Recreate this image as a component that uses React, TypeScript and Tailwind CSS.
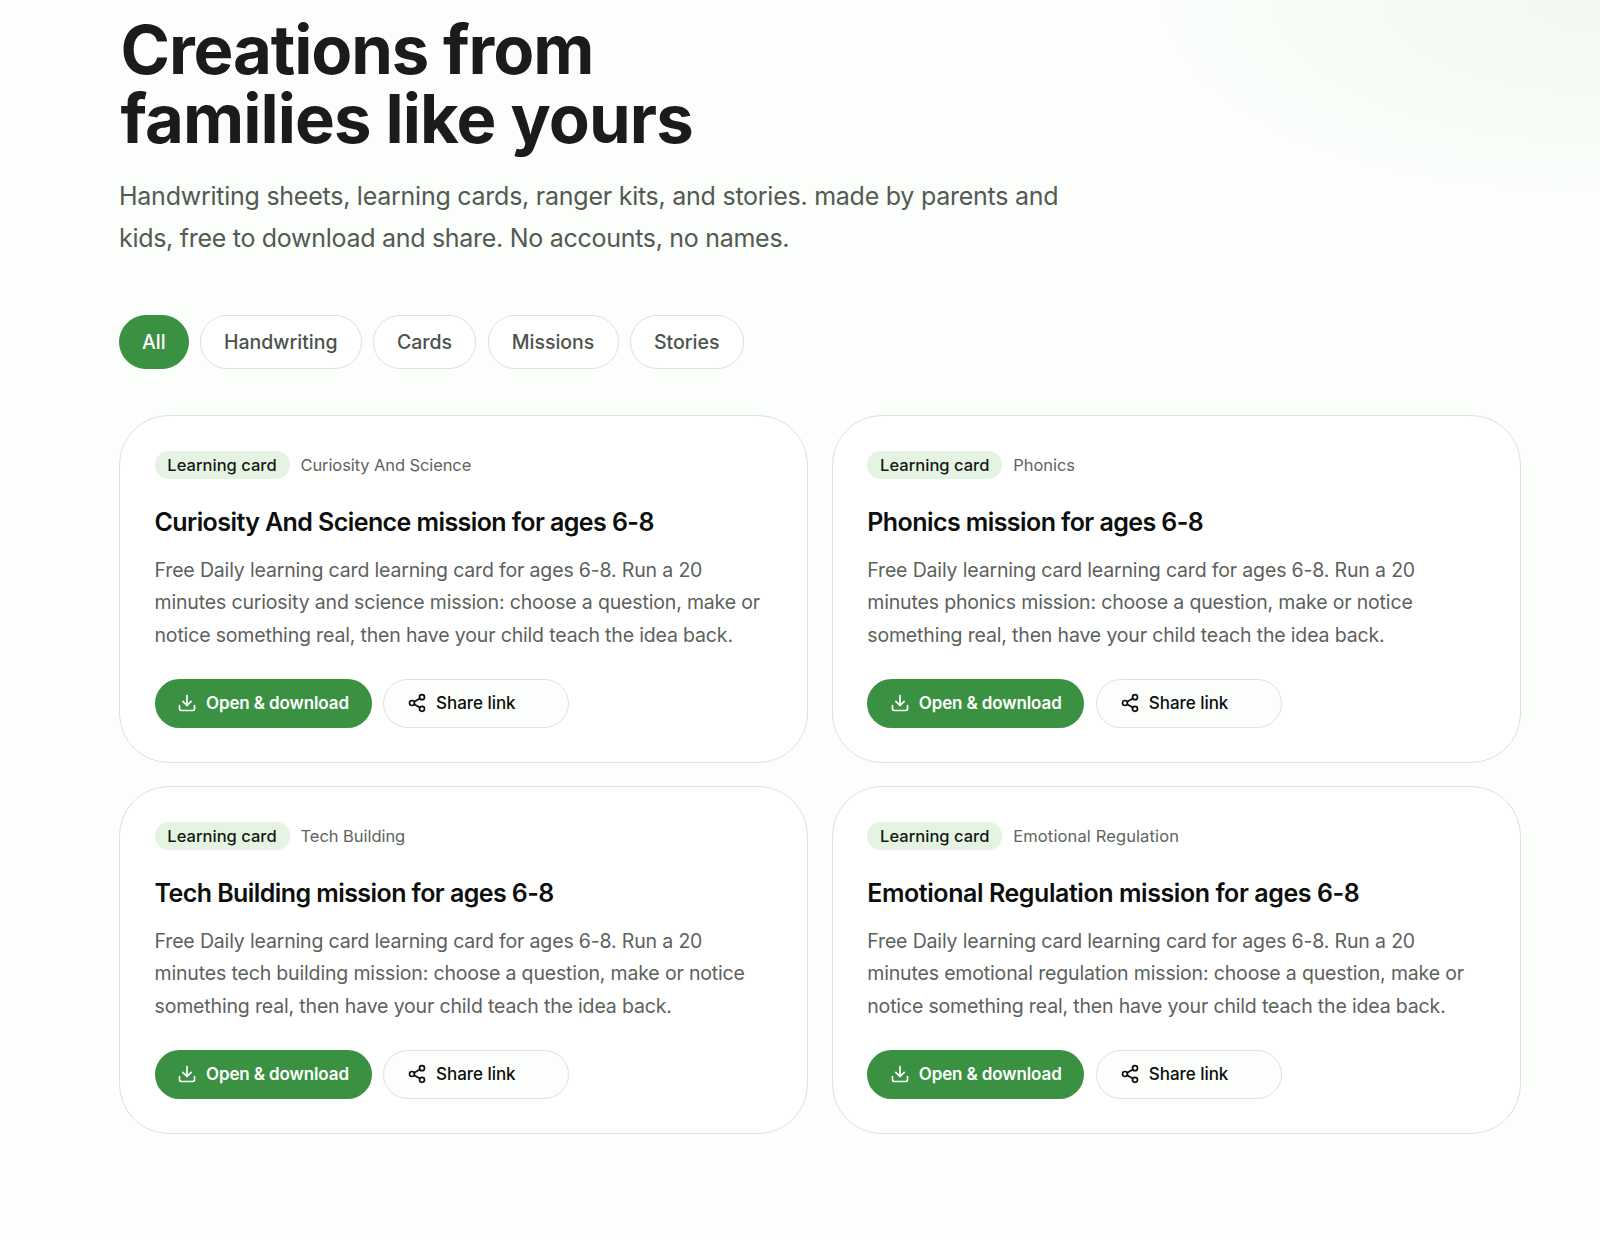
import { Download, Share2 } from "lucide-react";
import clsx from "clsx";

const filters = [
  { label: "All", width: "w-[69.5px]", active: true },
  { label: "Handwriting", width: "w-[161.5px]" },
  { label: "Cards", width: "w-[103px]" },
  { label: "Missions", width: "w-[131px]" },
  { label: "Stories", width: "w-[113.5px]" },
];

const intro = "Free Daily learning card learning card for ages 6-8. Run a 20";

const cards = [
  {
    topic: "Curiosity And Science",
    titleTracking: "tracking-[-0.58px]",
    topicTracking: "tracking-[-0.1px]",
    lines: [
      intro,
      "minutes curiosity and science mission: choose a question, make or",
      "notice something real, then have your child teach the idea back.",
    ],
  },
  {
    topic: "Phonics",
    titleTracking: "tracking-[-0.57px]",
    topicTracking: "tracking-[-0.05px]",
    lines: [
      intro,
      "minutes phonics mission: choose a question, make or notice",
      "something real, then have your child teach the idea back.",
    ],
  },
  {
    topic: "Tech Building",
    titleTracking: "tracking-[-0.57px]",
    topicTracking: "tracking-[-0.05px]",
    lines: [
      intro,
      "minutes tech building mission: choose a question, make or notice",
      "something real, then have your child teach the idea back.",
    ],
  },
  {
    topic: "Emotional Regulation",
    titleTracking: "tracking-[-0.43px]",
    topicTracking: "tracking-[0.12px]",
    lines: [
      intro,
      "minutes emotional regulation mission: choose a question, make or",
      "notice something real, then have your child teach the idea back.",
    ],
  },
];

type Card = (typeof cards)[number];

function CreationCard({ topic, titleTracking, topicTracking, lines }: Card) {
  return (
    <article className="h-[347.5px] rounded-[50px] border border-[#dde2dc] bg-white px-[34.5px] pt-[34.5px] whitespace-nowrap">
      <div className="flex h-7 items-center gap-[11px]">
        <span className="flex h-7 w-[135px] items-center justify-center rounded-full bg-[#e5f4e2] pt-[1.5px] text-[16.5px] font-medium tracking-[0.02px] text-[#141814]">
          Learning card
        </span>
        <span className={clsx("pt-[1.5px] text-[16.5px] text-[#5d645d]", topicTracking)}>{topic}</span>
      </div>
      <h2 className={clsx("mt-[27.5px] text-[25px] leading-8 font-semibold text-[#0c0f0c]", titleTracking)}>
        {topic} mission for ages 6-8
      </h2>
      <p className="mt-4 text-[19.5px] leading-[32.4px] tracking-[-0.16px] text-[#5b625b]">
        {lines.map((line) => (
          <span key={line} className="block">
            {line}
          </span>
        ))}
      </p>
      <div className="mt-7 flex gap-[11.5px]">
        <button className="flex h-[48.5px] w-[217px] items-center gap-[9px] rounded-full bg-[#3a9142] pl-[22.5px] text-[17px] font-semibold tracking-[-0.12px] text-white">
          <Download size={20} strokeWidth={2} />
          Open &amp; download
        </button>
        <button className="flex h-[48.5px] w-[186px] items-center gap-[9px] rounded-full border border-[#dde2dc] bg-[#fbfefb] pl-[23px] text-[17px] font-medium tracking-[-0.04px] text-[#0c0f0c]">
          <Share2 size={20} strokeWidth={2} />
          Share link
        </button>
      </div>
    </article>
  );
}

export default function App() {
  return (
    <main className="h-[1240px] w-[1600px] overflow-hidden bg-[#fbfefb] bg-[radial-gradient(ellipse_440px_190px_at_100%_0%,#f3f9f2_0%,#f6fcf5_50%,#fbfefb_100%)] pt-[14.5px] pl-[119px] font-['Inter',sans-serif]">
      <h1 className="pl-[1.5px] text-[67px] leading-[69px] font-bold text-[#1a1c19]">
        <span className="block tracking-[-1.1px]">Creations from</span>
        <span className="block tracking-[-0.9px]">families like yours</span>
      </h1>
      <p className="mt-[22.5px] text-[25px] leading-[42px] text-[#525a52]">
        <span className="block tracking-[-0.25px]">
          Handwriting sheets, learning cards, ranger kits, and stories. made by parents and
        </span>
        <span className="block tracking-[-0.29px]">
          kids, free to download and share. No accounts, no names.
        </span>
      </p>
      <nav className="mt-14 flex gap-[11.5px]">
        {filters.map((f) => (
          <button
            key={f.label}
            className={clsx(
              "flex h-[54px] items-center justify-center rounded-full border pt-[1.5px] text-[19.5px] font-medium",
              f.width,
              f.active
                ? "border-[#3a9142] bg-[#3a9142] text-white"
                : "border-[#dde2dc] bg-white text-[#4c534c]",
            )}
          >
            {f.label}
          </button>
        ))}
      </nav>
      <section className="mt-[46px] grid w-[1402px] grid-cols-2 gap-x-[23.5px] gap-y-[23.5px]">
        {cards.map((c) => (
          <CreationCard key={c.topic} {...c} />
        ))}
      </section>
    </main>
  );
}
